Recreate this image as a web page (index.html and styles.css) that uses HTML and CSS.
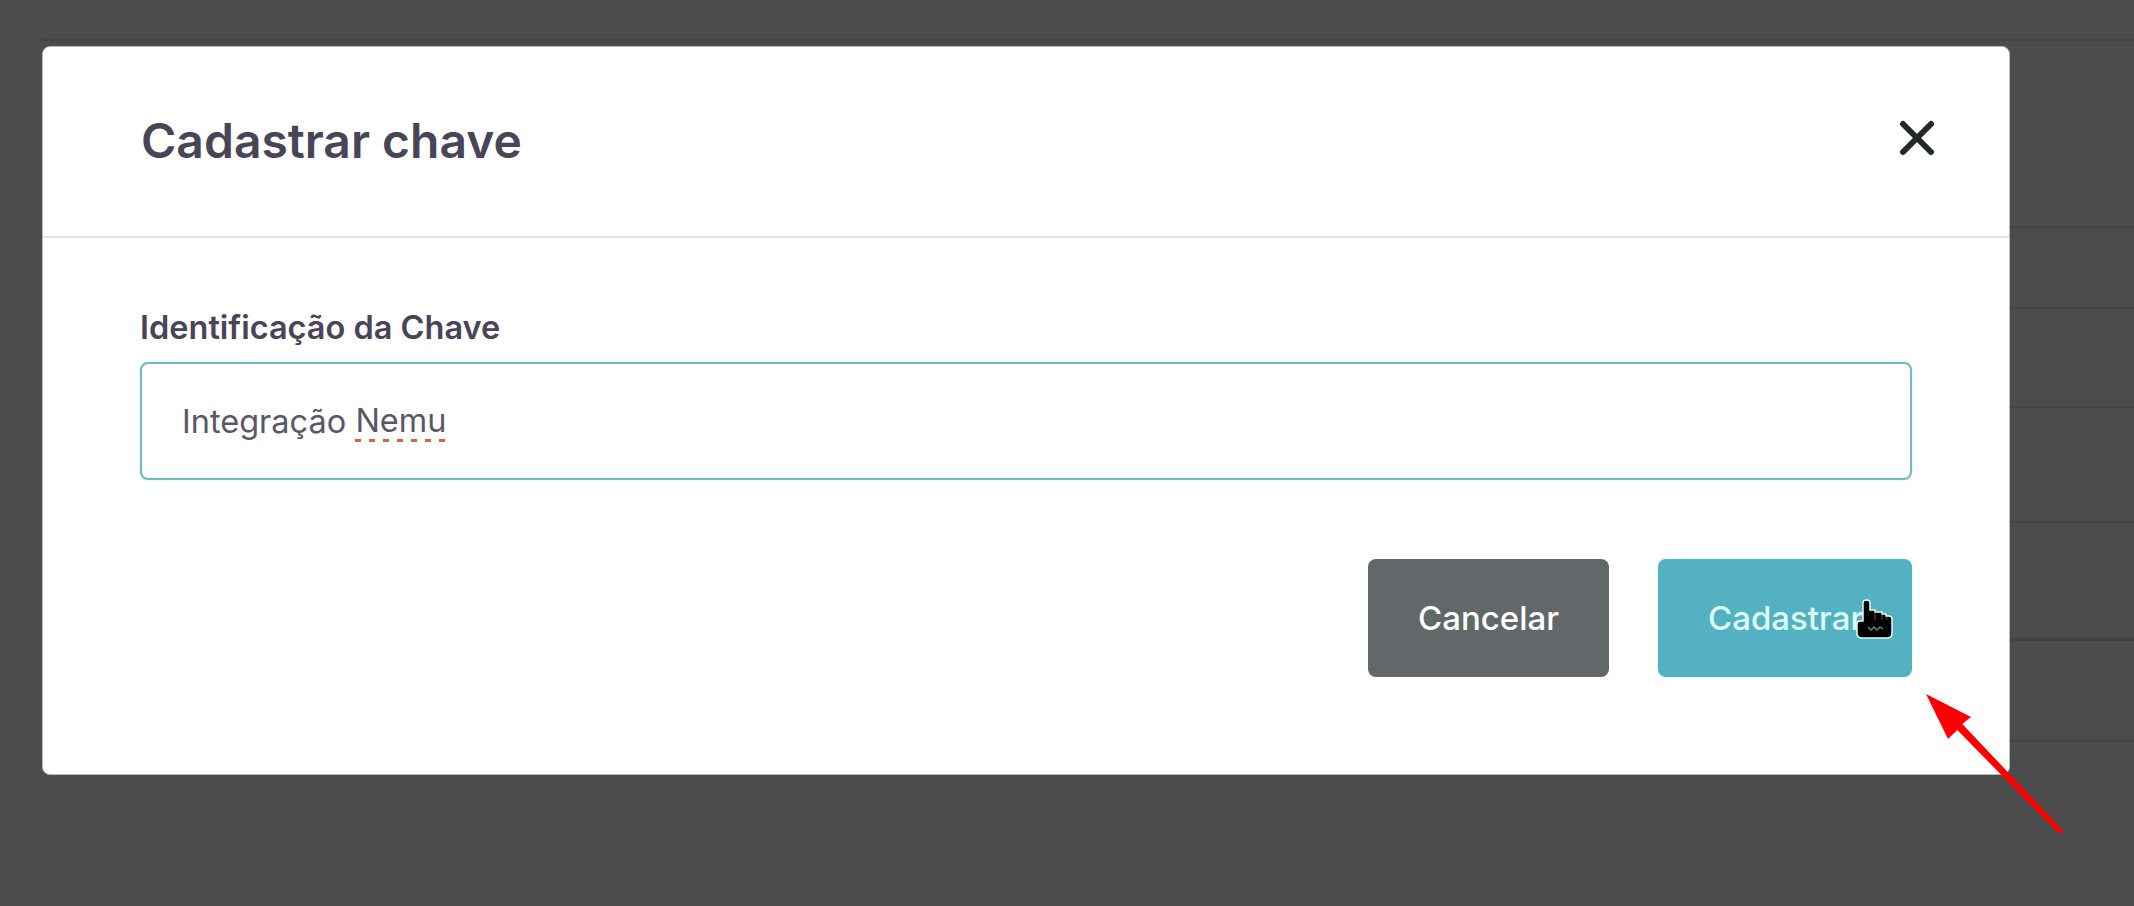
FILE: index.html
```html
<!DOCTYPE html>
<html>
<head lang="pt-BR">
    <meta charset="UTF-8">
    <title>Cadastrar chave</title>
    <link rel="stylesheet" href="styles.css">
</head>
<body>
<div class="backdrop">
    <span class="bg-line line-1"></span>
    <span class="bg-line line-2"></span>
    <span class="bg-line line-3"></span>
    <span class="bg-line line-4"></span>
    <span class="bg-line line-5"></span>
    <span class="bg-line line-6"></span>
    <span class="bg-line line-7"></span>
</div>
<div class="modal">
    <div class="modal-header">
        <h2 class="modal-title">Cadastrar chave</h2>
        <button class="close" type="button">
            <svg width="36" height="36" viewBox="0 0 36 36"><path d="M4 4L32 32M32 4L4 32" stroke="#212925" stroke-width="6" stroke-linecap="round" fill="none"/></svg>
        </button>
    </div>
    <div class="modal-body">
        <label class="field-label">Identificação da Chave</label>
        <div class="field-input">Integração <span class="misspelled">Nemu</span></div>
        <div class="actions">
            <button class="btn btn-cancel" type="button">Cancelar</button>
            <button class="btn btn-save" type="button">Cadastrar</button>
        </div>
    </div>
</div>
<svg class="cursor" width="40" height="42" viewBox="0 0 40 42">
    <path d="M10 5C10 3 11.500 2 13.500 2C15.500 2 17 3 17 5V12H22V14H29V16H33V18H36C38 18 39 19 39 21V35C39 38 37 40 34 40H9C6 40 4 38 4 35V26C4 24 5 23 7 23H10Z" fill="#000" stroke="#e4f7f8" stroke-width="1.500"/>
    <path d="M22 15V22M29 17V22M34 19V22" stroke="#555" stroke-width="1" fill="none"/>
    <path d="M15 29L18 32L21 29L24 32L27 29L30 31" stroke="#777" stroke-width="1.500" fill="none"/>
</svg>
<svg class="arrow" width="145" height="150" viewBox="0 0 145 150">
    <path d="M2 1L47 24L38.300 31L139.300 137.700L135.300 141L33.300 37L24 46Z" fill="#fe0000"/>
</svg>
</body>
</html>
```
FILE: styles.css
```css
* { margin: 0; padding: 0; box-sizing: border-box; }
html, body { height: 100%; overflow: hidden; }
body { background: #4c4c4c; font-family: Inter, "Liberation Sans", sans-serif; color: #4a4458; position: relative; }
.backdrop { position: absolute; top: 0; left: 0; right: 0; bottom: 0; }
.bg-line { position: absolute; left: 42px; right: 0; height: 2px; background: #454545; }
.line-1 { top: 39px; }
.line-2 { top: 226px; }
.line-3 { top: 307px; }
.line-4 { top: 406px; }
.line-5 { top: 521px; }
.line-6 { top: 638px; height: 3px; background: #424242; }
.line-7 { top: 740px; }

.modal { position: absolute; left: 42px; top: 46px; width: 1968px; height: 729px; background: #fff; border: 1px solid #b9b9b9; border-radius: 8px; }
.modal-header { height: 191px; padding: 0 74px 0 98px; display: flex; align-items: center; justify-content: space-between; border-bottom: 2px solid #dee2e6; }
.modal-title { font-size: 48px; font-weight: 600; line-height: 1.2; margin-bottom: 2px; color: #4a4458; }
.close { border: 0; background: none; display: flex; margin-bottom: 8px; }

.modal-body { padding: 72px 97px 0 97px; }
.field-label { display: block; font-size: 32.500px; font-weight: 600; line-height: 36px; margin-bottom: 16px; color: #4a4458; }
.field-input { height: 118px; border: 2px solid #6fb9bf; border-radius: 8px; box-shadow: 0 0 0 1px #e2fbfb; padding: 0 40px; display: flex; align-items: center; font-size: 32.500px; color: #5c5768; white-space: pre; }
.misspelled { padding-bottom: 2px; background: repeating-linear-gradient(90deg, #d9604f 0 6px, transparent 6px 14px) left bottom / 100% 3px no-repeat; }

.actions { display: flex; justify-content: flex-end; gap: 49px; margin-top: 79px; }
.btn { height: 118px; border: 0; border-radius: 8px; padding: 0 50px; text-align: left; font-family: inherit; font-size: 33px; font-weight: 500; }
.btn-cancel { width: 241px; background: #62686a; color: #fff; }
.btn-save { width: 254px; background: #54b1c1; color: #dcfbfd; box-shadow: 0 0 0 1px #e2fbfb; }

.cursor { position: absolute; left: 1853px; top: 598px; }
.arrow { position: absolute; left: 1924px; top: 693px; }
```
